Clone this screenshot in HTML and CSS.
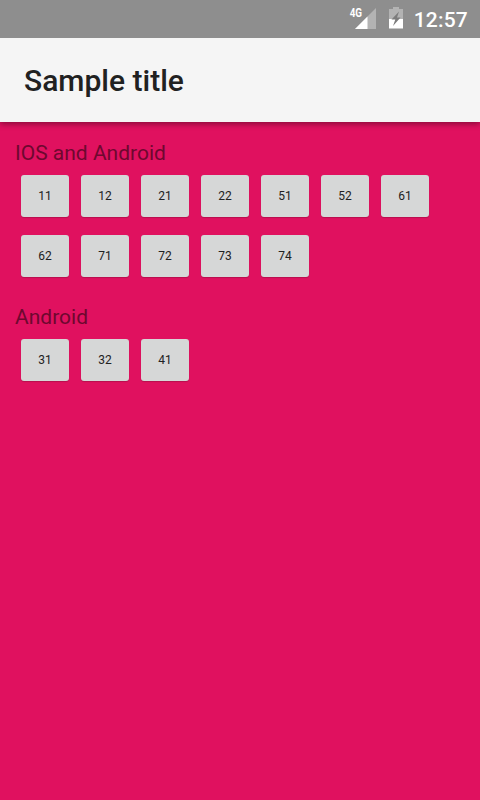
FILE: index.html
```html
<!DOCTYPE html>
<html lang="en">
<head>
<meta charset="utf-8">
<title>Sample title</title>
<link rel="stylesheet" href="styles.css">
</head>
<body>
<div class="status">
  <span class="network">4G</span>
  <svg class="signal" width="21" height="21" viewBox="0 0 21 21"><path fill="#b3b3b3" d="M21 0v21H0z"/><path fill="#fff" d="M12.500 8.500v12.500H0z"/></svg>
  <svg class="battery" width="14" height="22" viewBox="0 0 14 22"><path fill="#b3b3b3" d="M4 0h6v2h4v10H0V2h4z"/><path fill="#fff" d="M0 12h14v9.500H0z"/><path fill="#7c7c7c" d="M10 4.500 2.500 12.500h3.800L4 19l7.500-8.500H8z"/></svg>
  <span class="clock">12:57</span>
</div>
<header class="appbar"><h1>Sample title</h1></header>
<main>
  <section>
    <h2>IOS and Android</h2>
    <div class="buttons">
      <button>11</button><button>12</button><button>21</button><button>22</button><button>51</button><button>52</button><button>61</button>
      <button>62</button><button>71</button><button>72</button><button>73</button><button>74</button>
    </div>
  </section>
  <section>
    <h2>Android</h2>
    <div class="buttons">
      <button>31</button><button>32</button><button>41</button>
    </div>
  </section>
</main>
</body>
</html>
```
FILE: styles.css
```css
* { box-sizing: border-box; }
body {
  margin: 0;
  height: 800px;
  overflow: hidden;
  background: #e0115f;
  font-family: Roboto, sans-serif;
}
.status {
  position: relative;
  z-index: 1;
  height: 38px;
  background: #8e8e8e;
  color: #fff;
  display: flex;
  justify-content: flex-end;
  align-items: flex-start;
  padding-right: 12px;
}
.network {
  font: 700 12px/12px Roboto, sans-serif;
  transform: scaleX(.82);
  transform-origin: right;
  margin: 7px -7px 0 0;
}
.signal { margin: 8px 13px 0 0; }
.battery { margin: 7px 11px 0 0; }
.clock { font-size: 21px; font-weight: 500; line-height: 40px; letter-spacing: .2px; }
.appbar {
  height: 84px;
  padding: 2px 0 0 24px;
  display: flex;
  align-items: center;
  background: #f5f5f5;
  box-shadow: 0 2px 6px rgba(0, 0, 0, .4);
}
h1 { margin: 0; font-size: 30px; font-weight: 500; line-height: 36px; color: #212121; }
main { padding: 15px 15px 0; }
section { height: 164px; }
h2 {
  margin: 0;
  font-size: 21px;
  font-weight: 400;
  line-height: 32px;
  color: #6e082f;
}
.buttons {
  display: grid;
  grid-template-columns: repeat(7, 48px);
  gap: 18px 12px;
  padding: 6px 6px 0;
}
button {
  height: 42px;
  padding: 0;
  border: 0;
  border-radius: 3px;
  background: #d6d7d7;
  color: #212121;
  font: 400 12px/14px Roboto, sans-serif;
  box-shadow: 0 1px 1px rgba(0, 0, 0, .18);
}
```
